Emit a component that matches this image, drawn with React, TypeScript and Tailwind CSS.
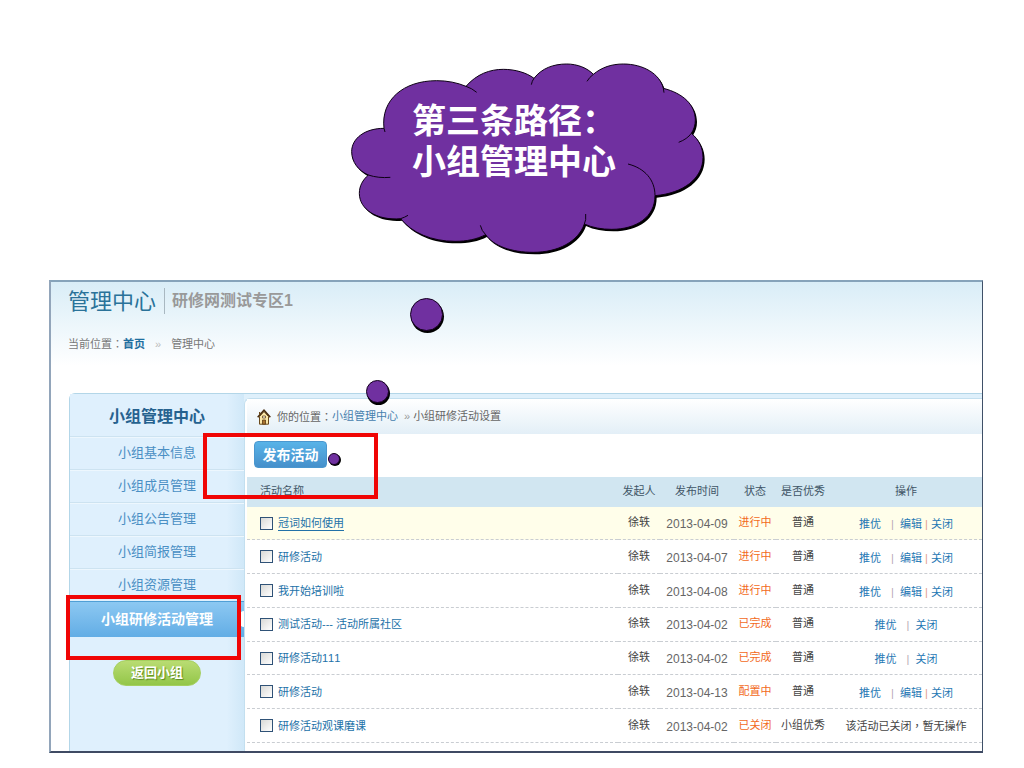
import React, { useState } from 'react';

const menuItems = ['小组基本信息', '小组成员管理', '小组公告管理', '小组简报管理', '小组资源管理'];

const activities = [
  { id: 1, name: '冠词如何使用', user: '徐轶', date: '2013-04-09', status: '进行中', level: '普通', actions: ['推优', '编辑', '关闭'] },
  { id: 2, name: '研修活动', user: '徐轶', date: '2013-04-07', status: '进行中', level: '普通', actions: ['推优', '编辑', '关闭'] },
  { id: 3, name: '我开始培训啦', user: '徐轶', date: '2013-04-08', status: '进行中', level: '普通', actions: ['推优', '编辑', '关闭'] },
  { id: 4, name: '测试活动--- 活动所属社区', user: '徐轶', date: '2013-04-02', status: '已完成', level: '普通', actions: ['推优', '关闭'] },
  { id: 5, name: '研修活动111', user: '徐轶', date: '2013-04-02', status: '已完成', level: '普通', actions: ['推优', '关闭'] },
  { id: 6, name: '研修活动', user: '徐轶', date: '2013-04-13', status: '配置中', level: '普通', actions: ['推优', '编辑', '关闭'] },
  { id: 7, name: '研修活动观课磨课', user: '徐轶', date: '2013-04-02', status: '已关闭', level: '小组优秀', actions: [] },
];

const cloudPath =
  'M132 235 C122 150 190 92 290 92 C322 92 352 98 378 109 C410 72 450 58 490 58 C525 58 560 68 582 85 C605 55 640 42 680 42 C712 42 742 54 760 73 C785 52 815 42 850 42 C910 42 960 72 970 115 C1030 130 1066 165 1066 210 C1066 225 1062 238 1054 250 C1078 270 1089 295 1089 322 C1089 385 1030 430 945 437 C945 500 890 538 815 538 C785 538 757 533 733 522 C715 574 655 607 580 607 C515 607 460 588 437 554 C410 568 380 574 345 574 C275 574 215 548 182 506 C110 512 58 478 58 430 C58 408 68 390 85 375 C55 362 35 336 35 305 C35 265 75 235 132 235Z';

// Short strokes that run from the outline into the cloud
const cloudFolds =
  'M132 235 L135 246 M378 109 Q396 115 410 127 M582 85 Q576 93 574 104 M760 73 Q748 82 741 94 M970 115 L972 128 M1054 250 Q1042 267 1016 277 M945 437 C945 390 915 355 864 342 M733 522 Q739 511 737 492 M437 554 Q425 543 421 526 M182 506 Q194 502 204 496 M85 375 Q115 385 151 382';

function Cloud() {
  return (
    <div className="relative ml-[340px] w-[380px]">
      <svg viewBox="0 0 1140 660" className="block h-[220px] w-full" aria-hidden="true">
        <path d={cloudPath} fill="#000" transform="translate(5 6)" />
        <path d={cloudPath} fill="#7030a0" stroke="#0d0014" strokeWidth="3" />
        <path d={cloudFolds} fill="none" stroke="#0d0014" strokeWidth="3" />
      </svg>
      <h1 className="absolute left-[72px] top-[51px] whitespace-nowrap text-[34px] font-bold leading-[41px] text-white">
        第三条路径：
        <br />
        小组管理中心
      </h1>
    </div>
  );
}

function HouseIcon() {
  return (
    <svg viewBox="0 0 14 16" className="h-4 w-[14px]" aria-hidden="true">
      <path d="M2.5 7.5v7.7h9V7.5L7 2.5z" fill="#fbe7a8" stroke="#6b4a1c" />
      <path d="M.7 8.3 7 1.2l6.3 7.1" fill="none" stroke="#4a2f12" strokeWidth="1.6" />
      <path d="M2.6 3v3" stroke="#6b4a1c" strokeWidth="1.2" />
      <path d="M5.5 7h3v2h-3z" fill="#fff" stroke="#6b4a1c" strokeWidth=".8" />
      <path d="M5.5 11h3v4.2h-3z" fill="#a8742f" stroke="#5b3a14" strokeWidth=".8" />
    </svg>
  );
}

function Colon() {
  return <span className="font-['Noto_Sans_CJK_TC',sans-serif]">：</span>;
}

function Sidebar() {
  return (
    <nav className="w-[174px] shrink-0 bg-gradient-to-r from-[#dff0fd] from-90% to-[#d0e8f8] pb-[65px] text-center">
      <h2 className="flex h-[42px] items-center justify-center pt-1 text-base font-bold text-[#26628f]">小组管理中心</h2>
      <ul>
        {menuItems.map((item) => (
          <li key={item} className="border-t border-[#cde3f1]">
            <a href="#" className="block h-8 border-t border-[#edf7fe] text-[13px] leading-[30px] text-[#4a8fc4]">
              {item}
            </a>
          </li>
        ))}
        <li className="relative">
          <a
            href="#"
            className="block h-9 border-t border-[#4f9fd6] bg-gradient-to-b from-[#8cc8f2] to-[#62ade5] text-sm font-bold leading-[34px] text-white"
          >
            小组研修活动管理
          </a>
          <span className="absolute right-0 top-[10px] h-4 w-1 rounded-l-full bg-white" />
        </li>
      </ul>
      <button
        type="button"
        className="mt-[23px] h-[26px] w-[88px] rounded-full border border-[#a5cf5f] bg-gradient-to-b from-[#b9dc72] to-[#93c648] text-[13px] font-bold leading-6 text-white [text-shadow:1px_1px_1px_#5d8a1f]"
      >
        返回小组
      </button>
    </nav>
  );
}

function Actions({ actions }: { actions: string[] }) {
  if (actions.length === 0) {
    return (
      <span className="text-[#444]">
        该活动已关闭<span className="font-['Noto_Sans_CJK_TC',sans-serif]">，</span>暂无操作
      </span>
    );
  }
  return (
    <div className="flex items-center justify-center pt-0.5">
      {actions.map((action, index) => (
        <React.Fragment key={action}>
          {index === 1 && <span className="ml-2 mr-1 w-[7px] text-[#b9a9b5]">|</span>}
          {index === 2 && <span className="w-[9px] text-[#e39a8c]">|</span>}
          <a href="#" className="text-[#1f78b4]">{action}</a>
        </React.Fragment>
      ))}
    </div>
  );
}

function ActivityTable() {
  const [checked, setChecked] = useState<number[]>([]);

  const toggle = (id: number) => {
    setChecked(checked.includes(id) ? checked.filter((c) => c !== id) : [...checked, id]);
  };

  return (
    <table className="h-[266px] w-full table-fixed border-collapse text-center text-[11px] leading-4 text-[#444] [font-kerning:none]">
      <colgroup>
        <col />
        <col className="w-[42px]" />
        <col className="w-[74px]" />
        <col className="w-[42px]" />
        <col className="w-[54px]" />
        <col className="w-[152px]" />
      </colgroup>
      <thead>
        <tr className="h-[30px] bg-[#d1e6f1] text-[#3f5566]">
          <th className="pb-0.5 pl-[13px] text-left font-normal">活动名称</th>
          <th className="pb-0.5 font-normal">发起人</th>
          <th className="pb-0.5 font-normal">发布时间</th>
          <th className="pb-0.5 font-normal">状态</th>
          <th className="whitespace-nowrap pb-0.5 font-normal">是否优秀</th>
          <th className="pb-0.5 font-normal">操作</th>
        </tr>
      </thead>
      <tbody>
        {activities.map((row, index) => (
          <tr key={row.id} className={index === 0 ? 'border-b border-dashed border-[#c9cdd2] bg-[#fffeea]' : 'border-b border-dashed border-[#c9cdd2]'}>
            <td className="pl-[13px] text-left">
              <div className="flex items-center gap-[5px]">
                <input
                  type="checkbox"
                  id={`activity-${row.id}`}
                  aria-label={row.name}
                  checked={checked.includes(row.id)}
                  onChange={() => toggle(row.id)}
                  className="size-[13px] appearance-none border border-[#2f5277] bg-gradient-to-br from-[#d9d9d6] to-white checked:bg-[#2f5277]"
                />
                <a href="#" className={index === 0 ? 'border-b border-[#2271a8] leading-[14px] text-[#2271a8]' : 'text-[#2271a8]'}>
                  {row.name}
                </a>
              </div>
            </td>
            <td className="pb-0.5">{row.user}</td>
            <td className="pt-0.5 text-xs text-[#666]">{row.date}</td>
            <td className="pb-0.5 text-[#f26a1b]">{row.status}</td>
            <td className="whitespace-nowrap pb-0.5">{row.level}</td>
            <td className="whitespace-nowrap">
              <Actions actions={row.actions} />
            </td>
          </tr>
        ))}
      </tbody>
    </table>
  );
}

function App() {
  return (
    <div className="bg-white pb-[15px] pt-[50px] font-['Liberation_Sans','Noto_Sans_CJK_SC',sans-serif]">
      <Cloud />

      <main className="relative ml-[49px] mr-[41px] mt-[10px] border-2 border-r border-b-[#3f4a63] border-l-[#92a5ba] border-r-[#3f5068] border-t-[#86a3ba] bg-white">
        <header className="bg-gradient-to-b from-[#d9edf7] to-white pl-[17px]">
          <div className="flex h-[38px] items-center">
            <span className="text-[22px] text-[#2a7299]">管理中心</span>
            <span className="ml-2 mr-[7px] h-[26px] w-px bg-[#a9b8c1]" />
            <span className="text-base font-bold text-[#999]">研修网测试专区1</span>
          </div>
          <div className="flex h-[46px] items-center pt-0.5 text-[11px] text-[#777]">
            <span>当前位置<Colon /></span>
            <a href="#" className="font-bold text-[#1f6f9f]">首页</a>
            <span className="mx-[10px] text-[#bbb]">»</span>
            <span>管理中心</span>
          </div>
        </header>

        <div className="ml-[18px] mt-[27px] flex rounded-tl-md border-l border-t border-[#b3d6e8] bg-[#dff0fb]">
          <Sidebar />
          <section className="mt-1 min-w-0 flex-1 rounded-tl-md border-l border-t border-[#c3dfef] bg-white pl-0.5">
            <div className="flex h-[35px] items-center bg-gradient-to-b from-white to-[#e3eff7] pl-[10px] text-[11px] text-[#666]">
              <HouseIcon />
              <span className="ml-[6px]">你的位置<Colon /></span>
              <a href="#" className="text-[#4580ad]">小组管理中心</a>
              <span className="ml-[6px] mr-[3px] text-[#999]">»</span>
              <span>小组研修活动设置</span>
            </div>
            <div className="h-[43px] pl-[7px] pt-[7px]">
              <button
                type="button"
                className="block h-[27px] w-[73px] rounded-sm border border-[#4a97cf] bg-gradient-to-b from-[#58b3e8] to-[#4690cb] text-sm font-bold leading-6 text-white"
              >
                发布活动
              </button>
            </div>
            <ActivityTable />
          </section>
        </div>

        {/* callout frames and the thought bubbles leading up to the cloud */}
        <div className="pointer-events-none absolute left-[152px] top-[151px] h-[66px] w-[175px] border-4 border-[#f00505]" />
        <div className="pointer-events-none absolute left-[15px] top-[313px] h-[65px] w-[175px] border-4 border-[#f00505]" />
        <span className="absolute left-[359px] top-[16px] size-[33px] rounded-full border border-[#14001f] bg-[#7030a0] shadow-[1px_2px_0_#000]" />
        <span className="absolute left-[315px] top-[98px] size-[23px] rounded-full border border-[#14001f] bg-[#7030a0] shadow-[1px_2px_0_#000]" />
        <span className="absolute left-[277px] top-[171px] size-3 rounded-full border border-[#14001f] bg-[#7030a0] shadow-[1px_1px_0_#000]" />
      </main>
    </div>
  );
}

export default App;
